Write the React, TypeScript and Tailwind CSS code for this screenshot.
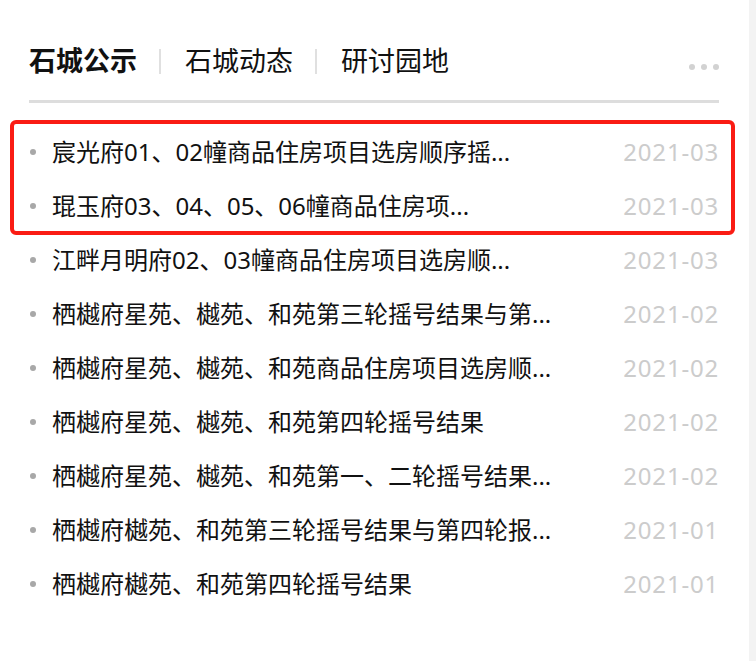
import React from 'react';

const tabs = ['石城公示', '石城动态', '研讨园地'];

const news = [
  { title: '宸光府01、02幢商品住房项目选房顺序摇号结果公示', date: '2021-03' },
  { title: '琨玉府03、04、05、06幢商品住房项目选房顺序摇号结果', date: '2021-03' },
  { title: '江畔月明府02、03幢商品住房项目选房顺序摇号结果', date: '2021-03' },
  { title: '栖樾府星苑、樾苑、和苑第三轮摇号结果与第四轮报名', date: '2021-02' },
  { title: '栖樾府星苑、樾苑、和苑商品住房项目选房顺序摇号结果', date: '2021-02' },
  { title: '栖樾府星苑、樾苑、和苑第四轮摇号结果', date: '2021-02' },
  { title: '栖樾府星苑、樾苑、和苑第一、二轮摇号结果公示', date: '2021-02' },
  { title: '栖樾府樾苑、和苑第三轮摇号结果与第四轮报名公告', date: '2021-01' },
  { title: '栖樾府樾苑、和苑第四轮摇号结果', date: '2021-01' },
];

const font = { fontFamily: '"Noto Sans", "Noto Sans CJK SC", sans-serif' };

// titles are cut at 20 characters
const shorten = (s: string) => (s.length > 20 ? s.slice(0, 20) + '...' : s);

const NewsRow: React.FC<{ title: string; date: string }> = ({ title, date }) => (
  <div className="flex items-center h-[54px]">
    <span className="w-[6px] h-[6px] ml-[1px] rounded-full bg-[#a8a8a8] shrink-0" />
    <span className="ml-[16px] whitespace-nowrap text-[24px] leading-[32px] text-[#111]">{shorten(title)}</span>
    <span className="ml-auto whitespace-nowrap text-[24px] leading-[32px] tracking-[0.8px] text-[#cccccc]">{date}</span>
  </div>
);

const App: React.FC = () => {
  return (
    <div className="flex w-[756px] h-[661px] bg-white overflow-hidden" style={font}>
      <div className="flex-1 pl-[29px] pr-[30px] pt-[39px]">
        <div className="flex items-center h-[44px]">
          {tabs.map((t, i) => (
            <React.Fragment key={t}>
              {i > 0 && <span className="w-[2px] h-[25px] ml-[22px] mr-[24px] bg-[#e0e0e0]" />}
              <span className={`text-[27px] leading-[36px] text-[#111] ${i === 0 ? 'font-bold' : ''}`}>{t}</span>
            </React.Fragment>
          ))}
          <div className="ml-auto mt-[12px] flex gap-[6px]">
            <span className="w-[6px] h-[6px] rounded-full bg-[#d2d2d2]" />
            <span className="w-[6px] h-[6px] rounded-full bg-[#d2d2d2]" />
            <span className="w-[6px] h-[6px] rounded-full bg-[#d2d2d2]" />
          </div>
        </div>
        <div className="mt-[17px] h-[3px] bg-[#dddddd]" />

        <div className="mt-[22px]">
          <div className="relative">
            {news.slice(0, 2).map((n) => (
              <NewsRow key={n.title} {...n} />
            ))}
            <div className="absolute left-[-19px] right-[-16px] top-[-5px] bottom-[-2px] border-[4px] border-[#fa1c14] rounded-[6px] pointer-events-none" />
          </div>
          {news.slice(2).map((n) => (
            <NewsRow key={n.title} {...n} />
          ))}
        </div>
      </div>
      <div className="w-[7px] bg-[#f3f3f3]" />
    </div>
  );
};

export default App;
